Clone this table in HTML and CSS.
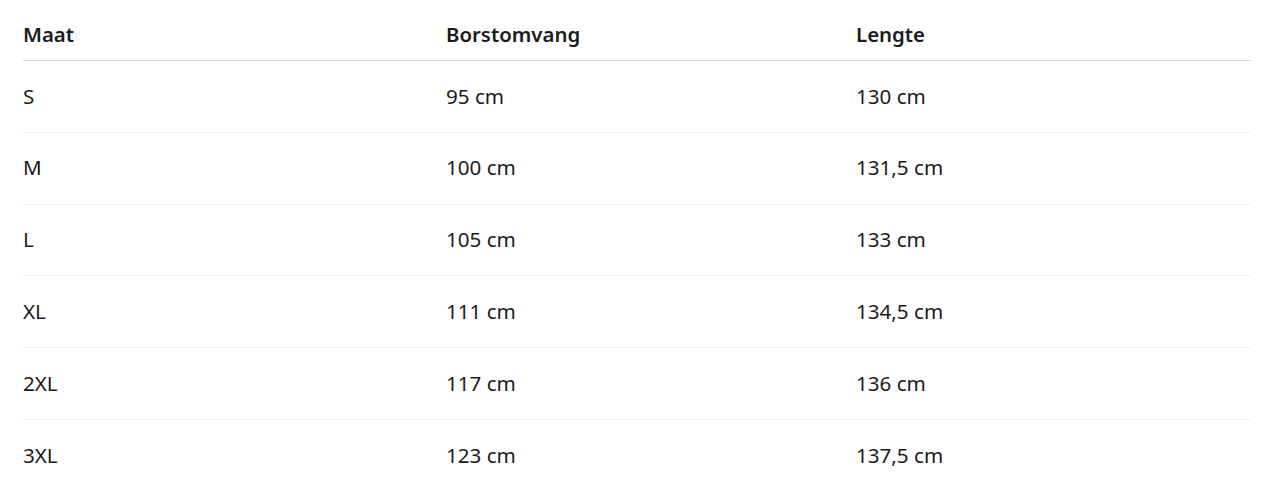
FILE: index.html
```html
<!DOCTYPE html>
<html lang="nl">
<head>
<meta charset="utf-8">
<title>Maattabel</title>
<link rel="stylesheet" href="styles.css">
</head>
<body>
<div class="wrap">
<table class="size-table">
  <thead>
    <tr><th>Maat</th><th>Borstomvang</th><th>Lengte</th></tr>
  </thead>
  <tbody>
    <tr><td>S</td><td>95 cm</td><td>130 cm</td></tr>
    <tr><td>M</td><td>100 cm</td><td>131,5 cm</td></tr>
    <tr><td>L</td><td>105 cm</td><td>133 cm</td></tr>
    <tr><td>XL</td><td>111 cm</td><td>134,5 cm</td></tr>
    <tr><td>2XL</td><td>117 cm</td><td>136 cm</td></tr>
    <tr><td>3XL</td><td>123 cm</td><td>137,5 cm</td></tr>
  </tbody>
</table>
</div>
</body>
</html>
```
FILE: styles.css
```css
html, body {
  margin: 0;
  padding: 0;
  background: #ffffff;
}
body {
  font-family: "Noto Sans", "Open Sans", sans-serif;
  color: #1b1b1b;
}
.wrap {
  padding: 8px 21px 0 23px;
}
.size-table {
  width: 100%;
  border-collapse: collapse;
  table-layout: fixed;
  line-height: 23.4px;
}
.size-table th:nth-child(1), .size-table td:nth-child(1) { width: 423px; }
.size-table th:nth-child(2), .size-table td:nth-child(2) { width: 410px; }
.size-table th {
  text-align: left;
  font-size: 20.4px;
  font-weight: 600;
  padding: 15px 0 13.6px;
  border-bottom: 1px solid #d9d9d9;
}
.size-table td {
  font-size: 20.6px;
  padding: 23.7px 0 23.7px;
  border-bottom: 1px solid #f0f0f0;
  font-weight: 400;
}
.size-table tbody tr:last-child td {
  border-bottom: none;
}
```
